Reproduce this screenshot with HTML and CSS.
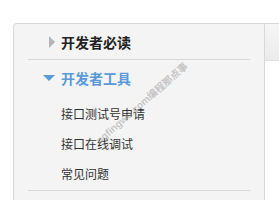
FILE: index.html
```html
<!DOCTYPE html>
<html lang="zh-CN">
<head>
<meta charset="utf-8">
<title>开发者工具</title>
<link rel="stylesheet" href="styles.css">
</head>
<body>
<div class="layout">
  <nav class="sidebar">
    <div class="group">
      <div class="heading">
        <span class="arrow arrow-right"></span>
        <span class="heading-text">开发者必读</span>
      </div>
    </div>
    <div class="group open">
      <div class="heading">
        <span class="arrow arrow-down"></span>
        <span class="heading-text">开发者工具</span>
      </div>
      <ul class="sub-list">
        <li>接口测试号申请</li>
        <li>接口在线调试</li>
        <li>常见问题</li>
      </ul>
    </div>
  </nav>
  <div class="side-tab"></div>
</div>
<div class="watermark">ngfingwu.com编程那点事</div>
</body>
</html>
```

FILE: styles.css
```css
html, body {
  margin: 0;
  padding: 0;
  background: #ffffff;
  font-family: "Noto Sans CJK SC", "Noto Sans", sans-serif;
  overflow: hidden;
}

.layout {
  display: flex;
  align-items: flex-start;
  margin-top: 23px;
  padding-left: 13px;
}

.sidebar {
  box-sizing: border-box;
  flex: 0 0 252px;
  height: 177px;
  background: #f4f4f4;
  border: 1px solid #d8d8d8;
  border-bottom: none;
  border-top-left-radius: 4px;
  padding: 0 14px;
}

.group {
  border-bottom: 1px solid #d9d9d9;
}

.heading {
  display: flex;
  align-items: center;
  height: 35px;
  padding-left: 15px;
}

.arrow {
  width: 12px;
  display: flex;
  justify-content: flex-end;
  margin-right: 6px;
}

.arrow-right::before {
  content: "";
  border-left: 6px solid #b5b5b5;
  border-top: 6px solid transparent;
  border-bottom: 6px solid transparent;
}

.arrow-down::before {
  content: "";
  border-top: 6px solid #5a9ad8;
  border-left: 6px solid transparent;
  border-right: 6px solid transparent;
}

.heading-text {
  font-size: 14px;
  font-weight: bold;
  color: #222222;
  line-height: 1;
}

.open .heading-text {
  color: #5a9ad8;
}

.sub-list {
  list-style: none;
  margin: 0;
  padding: 4px 0 1px 33px;
}

.sub-list li {
  height: 30px;
  line-height: 30px;
  font-size: 12px;
  color: #333333;
}

.side-tab {
  flex: 0 0 14px;
  height: 36px;
  background: linear-gradient(#f6f6f6, #ebebeb);
  border-top: 1px solid #d8d8d8;
  border-bottom: 1px solid #e2e2e2;
}

.watermark {
  position: absolute;
  left: 101px;
  top: 136px;
  font-size: 10px;
  line-height: 10px;
  white-space: nowrap;
  color: rgba(150, 150, 150, 0.5);
  font-family: "Liberation Sans", "Noto Sans CJK SC", sans-serif;
  font-weight: bold;
  transform: rotate(-41deg);
  transform-origin: left bottom;
  pointer-events: none;
}
```
